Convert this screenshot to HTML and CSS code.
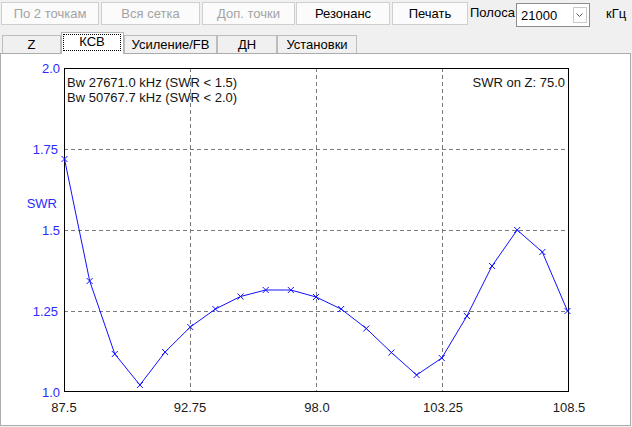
FILE: index.html
```html
<!DOCTYPE html>
<html>
  <head>
    <meta charset="utf-8">
    <title>КСВ</title>
    <link rel="stylesheet" href="styles.css">
  </head>

  <body>
    <!-- Верхняя панель кнопок -->
    <div class="toolbar">
      <button class="btn btn-pts" disabled>По 2 точкам</button>
      <button class="btn btn-grid" disabled>Вся сетка</button>
      <button class="btn btn-extra" disabled>Доп. точки</button>
      <button class="btn btn-res">Резонанс</button>
      <button class="btn btn-print">Печать</button>
      <span class="band-label">Полоса</span>
      <div class="combo">
        <span class="combo-value">21000</span>
        <span class="combo-drop">
          <svg width="7" height="4" viewBox="0 0 7 4"><path d="M0.5 0.5 L3.5 3.5 L6.5 0.5" fill="none" stroke="#555" stroke-width="1"/></svg>
        </span>
      </div>
      <span class="unit">кГц</span>
    </div>

    <!-- Вкладки -->
    <div class="tabs">
      <div class="tab tab-z">Z</div>
      <div class="tab tab-swr active"><span class="focus">КСВ</span></div>
      <div class="tab tab-gain">Усиление/FB</div>
      <div class="tab tab-dn">ДН</div>
      <div class="tab tab-set">Установки</div>
    </div>

    <!-- График КСВ -->
    <div class="panel">
      <svg class="chart" width="629" height="371" viewBox="1 54 629 371">
        <g class="grid">
          <line x1="64" y1="149.5" x2="568" y2="149.5"/>
          <line x1="64" y1="230.5" x2="568" y2="230.5"/>
          <line x1="64" y1="311.5" x2="568" y2="311.5"/>
          <line x1="190.5" y1="68" x2="190.5" y2="391"/>
          <line x1="316.5" y1="68" x2="316.5" y2="391"/>
          <line x1="442.5" y1="68" x2="442.5" y2="391"/>
        </g>
        <rect class="frame" x="64.5" y="68.5" width="504" height="323"/>

        <polyline class="curve" id="curve" points=""/>
        <g class="marks" id="marks"></g>

        <g class="ylabels">
          <text x="60" y="73">2.0</text>
          <text x="58" y="154">1.75</text>
          <text x="60" y="235">1.5</text>
          <text x="58" y="316">1.25</text>
          <text x="60" y="397">1.0</text>
          <text x="57" y="208">SWR</text>
        </g>
        <g class="xlabels">
          <text x="64" y="412">87.5</text>
          <text x="190" y="412">92.75</text>
          <text x="317" y="412">98.0</text>
          <text x="443" y="412">103.25</text>
          <text x="569" y="412">108.5</text>
        </g>
        <g class="info">
          <text x="67" y="87">Bw 27671.0 kHz (SWR &lt; 1.5)</text>
          <text x="67" y="102">Bw 50767.7 kHz (SWR &lt; 2.0)</text>
          <text class="right" x="565" y="87">SWR on Z: 75.0</text>
        </g>
      </svg>
    </div>

    <script>
      // точки кривой КСВ (экранные координаты)
      let ys = [159, 281, 354, 385, 352, 327, 309, 296.5, 290, 290, 297,
                309, 328.5, 352.5, 375, 358, 316, 266, 230, 252, 311];
      let pts = [];
      let marks = '';
      for (let i = 0; i < ys.length; i++) {
        let x = 64.5 + i * 25.15;
        let y = ys[i];
        pts.push(x.toFixed(1) + ',' + y);
        marks += `<path d="M${x - 3} ${y - 3} L${x + 3} ${y + 3} M${x - 3} ${y + 3} L${x + 3} ${y - 3}"/>`;
      }
      document.getElementById('curve').setAttribute('points', pts.join(' '));
      document.getElementById('marks').innerHTML = marks;
    </script>
  </body>
</html>
```

FILE: styles.css
```css
/* Окно графика КСВ */
body{
  margin: 0;
  width: 632px;
  height: 427px;
  overflow: hidden;
  background-color: #f0f0f0;
  color: #000;
  font-family: "Liberation Sans", Arial, sans-serif;
  font-size: 13px;
}

.toolbar{
  display: flex;
  align-items: flex-start;
  height: 28px;
  padding: 2px 0 0 1px;
  box-sizing: border-box;
}

.btn{
  height: 23px;
  margin: 0 2px 0 0;
  padding: 0;
  border: 1px solid #cfcfcf;
  background-color: #fbfbfb;
  font-family: inherit;
  font-size: 13px;
  color: #000;
}

.btn:disabled{
  color: #a3a3a3;
}

.btn-pts{ width: 98px; }
.btn-grid{ width: 99px; }
.btn-extra{ width: 93px; margin-right: 1px; }
.btn-res{ width: 94px; margin-right: 2px; }
.btn-print{ width: 76px; }

.band-label{
  margin: 3px 1px 0 0;
  line-height: 15px;
}

.combo{
  display: flex;
  align-items: center;
  justify-content: space-between;
  width: 74px;
  height: 24px;
  margin-top: 1px;
  box-sizing: border-box;
  border: 1px solid #8d8d8d;
  background-color: #fff;
  padding: 0 2px 0 4px;
}

.combo-value{
  padding-top: 1px;
}

.combo-drop{
  display: flex;
  align-items: center;
  justify-content: center;
  width: 14px;
  height: 16px;
  box-sizing: border-box;
  border: 1px solid #c9c9c9;
  background-color: #fff;
}

.unit{
  margin: 4px 0 0 16px;
}

/* вкладки */
.tabs{
  display: flex;
  align-items: flex-end;
  height: 25px;
  padding-left: 2px;
}

.tab{
  height: 18px;
  box-sizing: border-box;
  border: 1px solid #bdbdbd;
  border-bottom: none;
  background-color: #f0f0f0;
  text-align: center;
  line-height: 16px;
  padding-top: 1px;
}

.tab-z{ width: 59px; }
.tab-swr{ width: 63px; }
.tab-gain{ width: 93px; }
.tab-dn{ width: 60px; }
.tab-set{ width: 80px; }

.tab.active{
  position: relative;
  z-index: 1;
  height: 22px;
  margin-bottom: -1px;
  padding: 1px 2px 3px 1px;
  background-color: #fff;
  border-color: #b5b5b5;
}

.focus{
  display: block;
  height: 17px;
  box-sizing: border-box;
  border: 1px dotted #000;
  line-height: 14px;
}

/* область графика */
.panel{
  width: 631px;
  height: 373px;
  box-sizing: border-box;
  border: 1px solid #acacac;
  background-color: #fff;
}

.chart{
  display: block;
}

.grid line{
  stroke: #7a7a7a;
  stroke-width: 1;
  stroke-dasharray: 4 3;
}

.frame{
  fill: none;
  stroke: #000;
  stroke-width: 1;
}

.curve{
  fill: none;
  stroke: #1010ff;
  stroke-width: 1;
}

.marks path{
  fill: none;
  stroke: #1010ff;
  stroke-width: 1;
}

.ylabels text{
  fill: #2b2bff;
  font-size: 13px;
  text-anchor: end;
}

.xlabels text{
  fill: #1a1a1a;
  font-size: 13px;
  text-anchor: middle;
}

.info text{
  fill: #141414;
  font-size: 13px;
}

.info .right{
  text-anchor: end;
}
```
